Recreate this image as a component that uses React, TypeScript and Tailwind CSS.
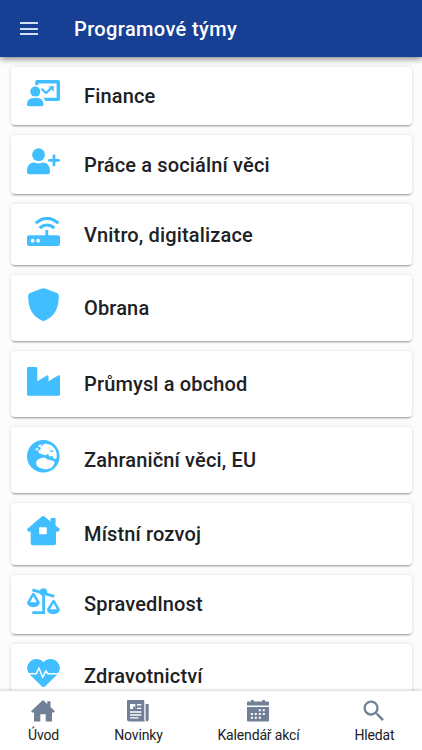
import React from "react";
import { MdSearch } from "react-icons/md";

const Finance = () => (
  <svg viewBox="0 0 33 27" className="h-[27px] w-[33px]" fill="currentColor">
    <path d="M10 0H31Q33 0 33 2V19Q33 21 31 21H18.5Q17.8 19 16 17.8H29.6V3.4H11.4V5.6Q10 4.8 8.3 5.2V2Q8.3 0 10 0Z" />
    <circle cx="8.3" cy="11.6" r="5" />
    <path d="M0 24.8Q0 18 6.5 18H10Q16.5 18 16.5 24.8Q16.5 26.2 15 26.2H1.5Q0 26.2 0 24.8Z" />
    <path d="M14.6 8.8L19 13L24.8 7.6" fill="none" stroke="currentColor" strokeWidth="2.2" />
    <path d="M21.4 6.2H26.8V11.6Z" />
  </svg>
);
const UserPlus = () => (
  <svg viewBox="0 0 33 27" className="h-[27px] w-[33px]" fill="currentColor">
    <circle cx="11.5" cy="6.7" r="6.4" />
    <path d="M0 23.5C0 17.5 3 14.6 7.3 14.6Q11.4 16.4 15.7 14.6C20 14.6 23 17.5 23 23.5Q23 26.3 20.5 26.3H2.5Q0 26.3 0 23.5Z" />
    <path d="M27 7.8V17M22.4 12.4H31.6" stroke="currentColor" strokeWidth="2.8" strokeLinecap="round" />
  </svg>
);
const Router = () => (
  <svg viewBox="0 0 33 30" className="h-[30px] w-[33px]" fill="currentColor">
    <path fillRule="evenodd" d="M2 18.3H18.4V13H21.2V18.3H31Q33 18.3 33 20.3V27Q33 29 31 29H2Q0 29 0 27V20.3Q0 18.3 2 18.3ZM5.6 21.8A1.9 1.9 0 1 0 5.6 25.6A1.9 1.9 0 1 0 5.6 21.8ZM11.1 21.8A1.9 1.9 0 1 0 11.1 25.6A1.9 1.9 0 1 0 11.1 21.8Z" />
    <path d="M8.8 6.2Q20 -3.6 31.4 6.2M12.6 11Q20 5 27.4 11" fill="none" stroke="currentColor" strokeWidth="3.1" />
  </svg>
);
const Shield = () => (
  <svg viewBox="0 0 33 34" className="h-[34px] w-[33px]" fill="currentColor">
    <path d="M14.9.6Q16.5-.2 18.1.6L30 5Q31.8 5.8 31.8 7.7C32 20 27.5 28.5 18.2 32.5Q16.5 33.4 14.8 32.5C5.5 28.5 1 20 1.2 7.7Q1.2 5.8 3 5Z" />
  </svg>
);
const Industry = () => (
  <svg viewBox="0 0 33 29" className="h-[29px] w-[33px]" fill="currentColor">
    <path d="M1.3 0H9Q10.3 0 10.3 1.3V14.3L19.8 8.5Q21.5 7.7 21.5 9.5V14.3L31 8.5Q33 7.7 33 9.5V27.2Q33 28.7 31.5 28.7H1.5Q0 28.7 0 27.2V1.3Q0 0 1.3 0Z" />
  </svg>
);
const Earth = () => (
  <svg viewBox="0 0 33 33" className="size-[33px]" fill="currentColor">
    <circle cx="16.3" cy="16.3" r="16.3" />
    <path fill="white" d="M15.5 5L18.5 3.5L24 5Q28.6 8 29.8 14L29.6 18L27 19.2L25.6 16L22.6 16.5L20.8 13.8L18.8 15.2L15.8 14.5L12 13.3L11 10.5L14.2 9L13 7.8Z" />
    <path fill="white" d="M11.3 5.3L14.4 4.2L14 6.5L11.8 7.2ZM8.5 8.7L11.2 7.5L10.8 9.8L8.8 10.4Z" />
    <path fill="white" d="M9 23.3Q9.3 19.8 13.2 18.5Q18.5 16.3 20 19.2L26.4 20.9Q28.8 22.2 26 26Q22.7 30.3 15.5 28.8Q9.5 27.4 9 23.3Z" />
    <path d="M22.5 9.8L24 10.8L26.8 10.6L26 12L23 11.6Z" />
  </svg>
);
const House = () => (
  <svg viewBox="0 0 33 30" className="h-[30px] w-[33px]" fill="currentColor">
    <path fillRule="evenodd" d="M14.8.6Q16.2-.5 17.6.6L23.5 5.4V3.1Q23.5 2.1 24.5 2.1H27.6Q28.6 2.1 28.6 3.1V9.6L32.4 12.7Q33.3 13.6 32.2 14.8Q31.5 15.8 30.4 15.8H29V27.3Q29 29.3 27 29.3H5.6Q3.7 29.3 3.7 27.3V15.8H2Q1.1 15.5.4 14.6Q-.4 13.6.4 12.7ZM13 11.3Q12.2 11.3 12.2 12.1V17.5Q12.2 18.3 13 18.3H19Q19.8 18.3 19.8 17.5V12.1Q19.8 11.3 19 11.3Z" />
  </svg>
);
const Scales = () => (
  <svg viewBox="0 0 33 27" className="h-[27px] w-[33px]" fill="currentColor">
    <path d="M5.4 1.8L27.3 8.3" stroke="currentColor" strokeWidth="2.8" />
    <circle cx="16.4" cy="4" r="3.8" />
    <path d="M16.6 5V24.7H5.3" fill="none" stroke="currentColor" strokeWidth="2.8" />
    <path fillRule="evenodd" d="M5 5.8Q6.4 3.8 7.8 5.8L12.8 14.2C12.8 20.6 0 20.6 0 14.2ZM6.4 8.2L3 14.3H9.8Z" />
    <path fillRule="evenodd" d="M25.2 12.8Q26.5 10.8 27.9 12.8L32.8 21.2C32.8 27.6 20 27.6 20 21.2ZM26.5 15.2L23.1 21.3H29.9Z" />
  </svg>
);
const Heart = () => (
  <svg viewBox="0 0 33 28" className="mt-[2px] h-[28px] w-[33px]" fill="currentColor">
    <path d="M16.5 3.4C20-.8 26-.9 29.8 2.5C33.8 6.3 33.7 11.5 30.3 15.4L18 27.4Q16.5 28.5 15 27.4L2.7 15.4C-.7 11.5-.8 6.3 3.2 2.5C7-.9 13-.8 16.5 3.4Z" />
    <path d="M0 14.7H9.2L12 9L15.7 18.4L19 11.6L20.8 14.8H33" fill="none" stroke="white" strokeWidth="1.5" strokeLinejoin="round" />
  </svg>
);

const Home = () => (
  <svg viewBox="0 0 24 22" className="h-[22px] w-6" fill="currentColor">
    <path d="M12 0L16.3 4V1.3H19.5V7L24 11.3L22.8 12.4H21V21.5H14.7V14.2H9.3V21.5H3V12.4H1.2L0 11.3Z" />
  </svg>
);
const News = () => (
  <svg viewBox="0 0 23 22" className="h-[22px] w-[23px]" fill="currentColor">
    <path fillRule="evenodd" d="M1 0H16Q17.3 0 17.3 1V19.5Q17.3 20.8 18.4 21.5H2.5Q0 21.5 0 19V1Q0 0 1 0ZM3 4V9H8.3V4ZM10 4V5.4H14.3V4ZM10 7.7V9.1H14.3V7.7ZM3 11.3V12.7H14.3V11.3ZM3 14.3V15.7H14.3V14.3ZM3 17.2V18.6H11.5V17.2Z" />
    <path d="M6.1 6.4H8.3V9H6.1ZM18.6 4H21.7V19.2Q21.4 21.5 20 21.5Q18.6 21.5 18.6 19.5Z" />
  </svg>
);
const Calendar = () => (
  <svg viewBox="0 0 22 22" className="h-[22px] w-[22px]" fill="currentColor">
    <path d="M1 1.4H4V0H6.8V1.4H15.2V0H18V1.4H21Q22 1.4 22 2.4V5.6H0V2.4Q0 1.4 1 1.4Z" />
    <path fillRule="evenodd" d="M0 7H22V20.5Q22 21.6 20.9 21.6H1.1Q0 21.6 0 20.5ZM11.8 9.3V11.3H13.8V9.3ZM15.8 9.3V11.3H17.8V9.3ZM3.9 13V15H5.9V13ZM7.8 13V15H9.8V13ZM11.8 13V15H13.8V13ZM15.8 13V15H17.8V13ZM3.9 16.7V18.7H5.9V16.7ZM7.8 16.7V18.7H9.8V16.7ZM11.8 16.7V18.7H13.8V16.7Z" />
  </svg>
);
const Search = () => <MdSearch className="size-7" />;

const teams = [
  { name: "Finance", icon: Finance, size: "h-[58px]" },
  { name: "Práce a sociální věci", icon: UserPlus, size: "h-[59px]" },
  { name: "Vnitro, digitalizace", icon: Router, size: "h-[61px]" },
  { name: "Obrana", icon: Shield, size: "h-[66px]" },
  { name: "Průmysl a obchod", icon: Industry, size: "h-[65.5px]" },
  { name: "Zahraniční věci, EU", icon: Earth, size: "h-[66px]" },
  { name: "Místní rozvoj", icon: House, size: "h-[62px]" },
  { name: "Spravedlnost", icon: Scales, size: "h-[59px]" },
  { name: "Zdravotnictví", icon: Heart, size: "h-[64px]" },
];

const tabs = [
  { name: "Úvod", icon: Home, width: "w-[86px]" },
  { name: "Novinky", icon: News, width: "w-[104px]" },
  { name: "Kalendář akcí", icon: Calendar, width: "w-[136px]" },
  { name: "Hledat", icon: Search, width: "w-[96px]" },
];

export default function App() {
  return (
    <div className="flex h-[750px] w-[422px] flex-col overflow-hidden bg-[#fcfcfc] font-['Roboto','Noto_Sans',sans-serif] text-[#202124]">
      <header className="z-10 flex h-[57px] shrink-0 items-center bg-[#173f94] pl-5 text-white shadow-[0_2px_6px_rgba(0,0,0,0.48)]">
        <div className="flex w-[18px] flex-col gap-[3.5px]">
          <span className="h-0.5 bg-[#d7e0f3]" />
          <span className="h-0.5 bg-[#d7e0f3]" />
          <span className="h-0.5 bg-[#d7e0f3]" />
        </div>
        <h1 className="ml-9 text-[20px] leading-6 font-medium tracking-[0.38px]">Programové týmy</h1>
      </header>
      <main className="flex min-h-0 flex-1 flex-col gap-[10px] overflow-hidden px-[10.5px] pt-[10px]">
        {teams.map(({ name, icon: Icon, size }) => (
          <section key={name} className={`flex shrink-0 rounded-[4px] bg-white pl-4 shadow-[0_2px_2px_-1px_rgba(0,0,0,0.38),0_0_4px_rgba(0,0,0,0.12)] ${size}`}>
            <div className={`w-[57.5px] text-[#40beff] ${name === "Průmysl a obchod" ? "pt-[16px]" : "pt-[13px]"}`}><Icon /></div>
            <h2 className="self-center text-[20px] leading-6 font-medium tracking-[0.15px]">{name}</h2>
          </section>
        ))}
      </main>
      <nav className="z-10 flex h-[59px] shrink-0 bg-white shadow-[0_-1px_3px_rgba(0,0,0,0.18)]">
        {tabs.map(({ name, icon: Icon, width }) => (
          <div key={name} className={`flex flex-col items-center pt-[5px] ${width}`}>
            <div className="flex h-[30px] items-center text-[#718096]"><Icon /></div>
            <span className="pl-px text-[14px] leading-[19px] tracking-[-0.15px] whitespace-nowrap">{name}</span>
          </div>
        ))}
      </nav>
    </div>
  );
}
